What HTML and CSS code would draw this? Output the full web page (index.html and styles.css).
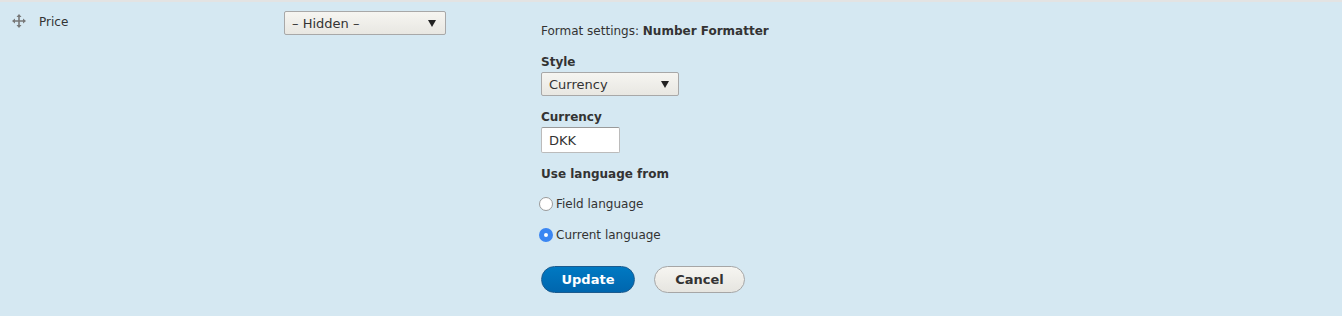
FILE: index.html
```html
<!DOCTYPE html>
<html lang="en">
<head>
    <meta charset="UTF-8">
    <meta name="viewport" content="width=device-width, initial-scale=1.0">
    <title>Manage display</title>
    <link rel="stylesheet" href="styles.css">
</head>
<body>
    <div class="field-row">
        <div class="cell cell-label">
            <span class="handle">
                <svg width="14" height="14" viewBox="0 0 14 14">
                    <path d="M7 0 L9.5 3 H7.8 V6.2 H11 V4.5 L14 7 L11 9.5 V7.8 H7.8 V11 H9.5 L7 14 L4.5 11 H6.2 V7.8 H3 V9.5 L0 7 L3 4.5 V6.2 H6.2 V3 H4.5 Z" fill="#777"/>
                </svg>
            </span>
            <span class="field-name">Price</span>
        </div>

        <div class="cell cell-type">
            <div class="select select-hidden">
                <span>– Hidden –</span>
                <span class="arrow"></span>
            </div>
        </div>

        <div class="cell cell-settings">
            <div class="settings-title">Format settings: <strong>Number Formatter</strong></div>

            <div class="form-item form-item-style">
                <label>Style</label>
                <div class="select select-style">
                    <span>Currency</span>
                    <span class="arrow"></span>
                </div>
            </div>

            <div class="form-item form-item-currency">
                <label for="currency">Currency</label>
                <input type="text" id="currency" value="DKK">
            </div>

            <div class="form-item">
                <label>Use language from</label>
                <div class="radios">
                    <div class="radio-item">
                        <span class="radio"></span>
                        <span>Field language</span>
                    </div>
                    <div class="radio-item">
                        <span class="radio checked"></span>
                        <span>Current language</span>
                    </div>
                </div>
            </div>

            <div class="actions">
                <button class="btn btn-primary">Update</button>
                <button class="btn">Cancel</button>
            </div>
        </div>
    </div>
</body>
</html>
```

FILE: styles.css
```css
body {
    margin: 0;
    background-color: #d5e8f2;
    font-family: "DejaVu Sans", Verdana, sans-serif;
    font-size: 12px;
    color: #333;
}
.field-row {
    display: flex;
    border-top: 2px solid #e3e3e3;
    height: 314px;
}
.cell-label {
    flex: 0 0 272px;
    padding: 12px 0 0 12px;
    display: flex;
    align-items: flex-start;
}
.handle {
    width: 14px;
    height: 14px;
    margin-right: 13px;
}
.field-name {
    line-height: 14px;
    margin-top: 1px;
}
.cell-type {
    flex: 0 0 257px;
    padding-top: 9px;
}
.cell-settings {
    flex: 0 0 auto;
    padding-top: 21px;
}
.select {
    display: flex;
    align-items: center;
    justify-content: space-between;
    box-sizing: border-box;
    height: 24px;
    padding: 0 9px 0 7px;
    border: 1px solid #a8a8a8;
    border-radius: 2px;
    background: linear-gradient(to bottom, #f6f5f1, #e8e7e2);
    font-size: 13px;
    color: #333;
}
.select-hidden {
    width: 162px;
}
.select-style {
    width: 138px;
    margin-top: -1px;
}
.arrow {
    width: 0;
    height: 0;
    border-left: 4px solid transparent;
    border-right: 4px solid transparent;
    border-top: 7px solid #222;
}
.settings-title {
    line-height: 16px;
    margin-bottom: 15px;
}
.form-item {
    margin-bottom: 12px;
}
.form-item-style,
.form-item-currency {
    margin-bottom: 13px;
}
label {
    display: block;
    font-weight: bold;
    margin-bottom: 3px;
    line-height: 16px;
}
input[type="text"] {
    display: block;
    box-sizing: border-box;
    width: 79px;
    height: 26px;
    margin-top: -1px;
    padding: 0 7px;
    border: 1px solid #bbb;
    border-top-color: #999;
    border-radius: 2px;
    background: #fff;
    font-family: inherit;
    font-size: 13px;
    color: #333;
}
.radios {
    padding-top: 11px;
}
.radio-item {
    display: flex;
    align-items: center;
    height: 16px;
    margin-bottom: 15px;
}
.radio-item:last-child {
    margin-bottom: 0;
}
.radio {
    box-sizing: border-box;
    width: 14px;
    height: 14px;
    margin-left: -2px;
    margin-right: 3px;
    border: 1px solid #9a9a9a;
    border-radius: 50%;
    background: #fff;
}
.radio.checked {
    border: 5px solid #3a86f2;
}
.actions {
    display: flex;
    gap: 19px;
    padding-top: 11px;
}
.btn {
    box-sizing: border-box;
    width: 91px;
    height: 27px;
    padding: 0;
    border: 1px solid #a6a6a6;
    border-radius: 14px;
    background: linear-gradient(to bottom, #f6f5f1, #e6e5e0);
    font-family: inherit;
    font-size: 13px;
    font-weight: bold;
    color: #333;
}
.btn-primary {
    width: 94px;
    background: linear-gradient(to bottom, #0079c2, #0066ae);
    border-color: #1c5b8e;
    color: #fff;
}
```
